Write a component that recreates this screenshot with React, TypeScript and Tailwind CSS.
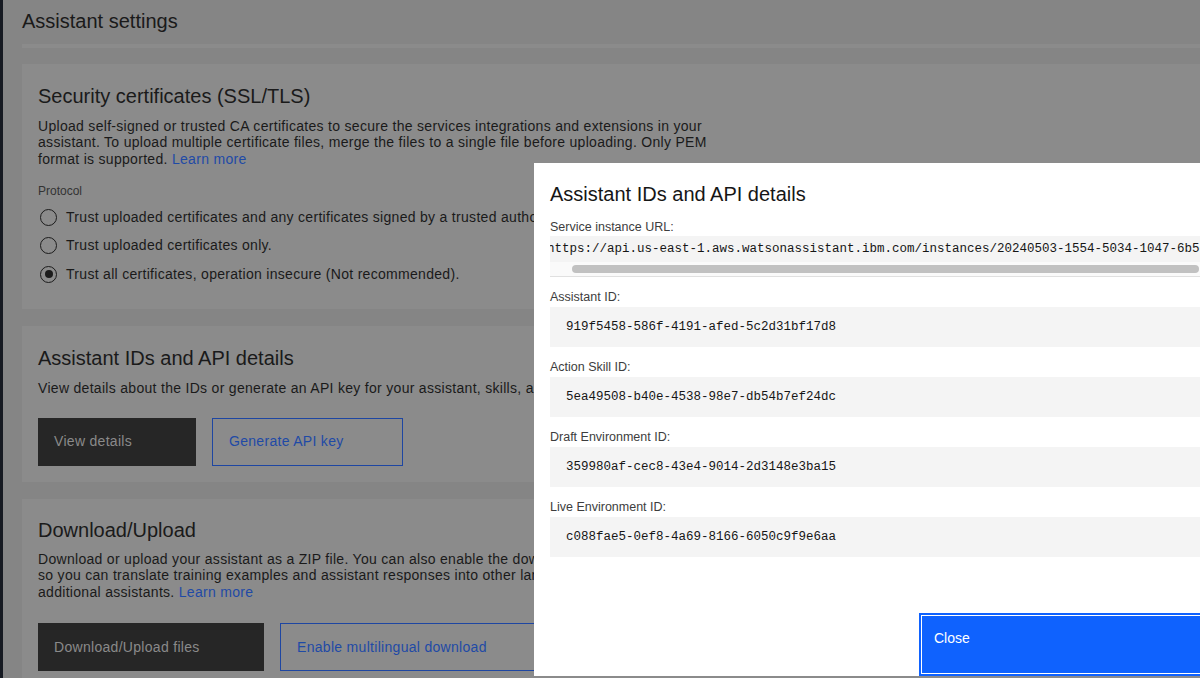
import { ReactNode } from "react";

// Shared ID rows shown inside the details modal
const idRows = [
  { label: "Assistant ID:", value: "919f5458-586f-4191-afed-5c2d31bf17d8" },
  { label: "Action Skill ID:", value: "5ea49508-b40e-4538-98e7-db54b7ef24dc" },
  { label: "Draft Environment ID:", value: "359980af-cec8-43e4-9014-2d3148e3ba15" },
  { label: "Live Environment ID:", value: "c088fae5-0ef8-4a69-8166-6050c9f9e6aa" },
];

function Card({ children, className = "" }: { children: ReactNode; className?: string }) {
  return <section className={`bg-[#8b8b8b] px-4 ${className}`}>{children}</section>;
}

function Radio({ label, checked = false }: { label: string; checked?: boolean }) {
  return (
    <label className="flex h-[28.5px] items-center gap-[9px] pl-[2px] text-[14px] tracking-[0.3px] whitespace-nowrap">
      <span className="flex h-[17px] w-[17px] shrink-0 items-center justify-center rounded-full border border-[#1c1c1c]">
        {checked && <span className="h-[8px] w-[8px] rounded-full bg-[#1c1c1c]" />}
      </span>
      {label}
    </label>
  );
}

function DarkButton({ children, width }: { children: ReactNode; width: string }) {
  return (
    <button className={`flex h-12 ${width} items-center bg-[#262626] pl-4 text-left text-[14px] tracking-[0.3px] text-[#8a8a8a]`}>
      {children}
    </button>
  );
}

function OutlineButton({ children, width }: { children: ReactNode; width: string }) {
  return (
    <button className={`flex h-12 ${width} shrink-0 items-center border border-[#1e46a2] pl-4 text-left text-[14px] tracking-[0.3px] text-[#1f4aa6]`}>
      {children}
    </button>
  );
}

function DetailsModal() {
  return (
    <div className="absolute left-[534px] top-[163px] flex h-[513px] w-[770px] flex-col bg-white text-[#161616]">
      <div className="px-4 pt-[17px]">
        <h2 className="text-[20px] leading-[28px]">Assistant IDs and API details</h2>

        <p className="mt-[11px] text-[12.5px] leading-4 text-[#3d3d3d]">Service instance URL:</p>
        <div className="mt-[1px] border-b border-[#e0e0e0] bg-[#fafafa]">
          <div className="flex h-[26px] items-center overflow-hidden bg-[#f4f4f4]">
            <span className="ml-[-3px] whitespace-nowrap font-['Liberation_Mono',monospace] text-[12.5px] text-[#161616]">
              https://api.us-east-1.aws.watsonassistant.ibm.com/instances/20240503-1554-5034-1047-6b5e2c7d9f14
            </span>
          </div>
          <div className="flex h-[14px] items-center">
            <div className="ml-[22px] h-[8px] w-[627px] rounded-full bg-[#c1c1c1]" />
          </div>
        </div>

        {idRows.map((row) => (
          <div key={row.label} className="mt-3">
            <p className="text-[12.5px] leading-4 text-[#3d3d3d]">{row.label}</p>
            <div className="mt-[2px] flex h-10 items-center bg-[#f4f4f4] pl-4 font-['Liberation_Mono',monospace] text-[12.5px] text-[#161616]">
              {row.value}
            </div>
          </div>
        ))}
      </div>

      <div className="mt-auto flex justify-end">
        <button className="flex h-[63px] w-1/2 items-start border-2 border-[#0f62fe] bg-[#0f62fe] pl-[13px] pt-[14px] text-left text-[14px] text-white shadow-[inset_0_0_0_1px_#ffffff]">
          <span className="block leading-[18px]">Close</span>
        </button>
      </div>
    </div>
  );
}

export default function App() {
  return (
    <div className="relative flex h-[678px] w-[1200px] overflow-hidden bg-[#858585] font-['Liberation_Sans',Arial,sans-serif] text-[#1a1a1a]">
      <div className="w-[3px] shrink-0 bg-[#161a22]" />

      <main className="flex-1 pl-[19px]">
        <h1 className="pt-[7px] text-[20px] leading-[28px]">Assistant settings</h1>
        <div className="mt-[9px] h-[4px] bg-[#8b8b8b]" />

        <div className="mt-4 flex flex-col gap-[17px]">
          {/* Security certificates */}
          <Card className="pt-[18px] pb-[21px]">
            <h2 className="text-[20px] leading-[28px]">Security certificates (SSL/TLS)</h2>
            <p className="mt-[8px] text-[14px] leading-[16.3px] tracking-[0.3px]">
              Upload self-signed or trusted CA certificates to secure the services integrations and extensions in your
              <br />
              assistant. To upload multiple certificate files, merge the files to a single file before uploading. Only PEM
              <br />
              format is supported. <span className="text-[#1f4aa6]">Learn more</span>
            </p>
            <p className="mt-[16px] text-[12px] leading-4 text-[#333333]">Protocol</p>
            <div className="mt-[4px] flex flex-col">
              <Radio label="Trust uploaded certificates and any certificates signed by a trusted authority." />
              <Radio label="Trust uploaded certificates only." />
              <Radio label="Trust all certificates, operation insecure (Not recommended)." checked />
            </div>
          </Card>

          {/* IDs and API */}
          <Card className="pt-[18px] pb-4">
            <h2 className="text-[20px] leading-[28px]">Assistant IDs and API details</h2>
            <p className="mt-[8px] text-[14px] leading-[16.5px] tracking-[0.3px]">
              View details about the IDs or generate an API key for your assistant, skills, and environments.
            </p>
            <div className="mt-[21px] flex gap-4">
              <DarkButton width="w-[158px]">View details</DarkButton>
              <OutlineButton width="w-[191px]">Generate API key</OutlineButton>
            </div>
          </Card>

          {/* Download / Upload */}
          <Card className="pt-[17px] pb-4">
            <h2 className="text-[20px] leading-[28px]">Download/Upload</h2>
            <p className="mt-[7px] text-[14px] leading-[16.5px] tracking-[0.3px]">
              Download or upload your assistant as a ZIP file. You can also enable the download of multilingual content
              <br />
              so you can translate training examples and assistant responses into other languages and upload them to
              <br />
              additional assistants. <span className="text-[#1f4aa6]">Learn more</span>
            </p>
            <div className="mt-[23px] flex gap-4">
              <DarkButton width="w-[226px]">Download/Upload files</DarkButton>
              <OutlineButton width="w-[290px]">Enable multilingual download</OutlineButton>
            </div>
          </Card>
        </div>
      </main>

      <DetailsModal />
    </div>
  );
}
